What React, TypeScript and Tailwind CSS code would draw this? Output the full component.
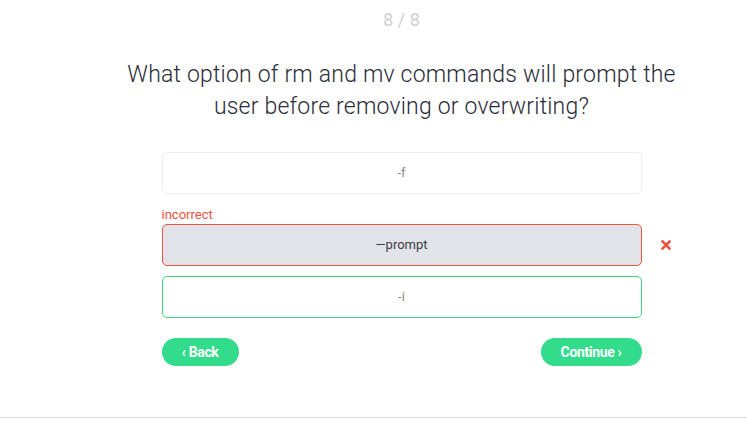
const options = [
  { label: '-f', state: 'idle' },
  { label: '—prompt', state: 'wrong' },
  { label: '-i', state: 'right' },
];

const App = () => {
  return (
    <div className="w-[747px] h-[422px] bg-white flex flex-col overflow-hidden" style={{ fontFamily: 'Roboto, "Liberation Sans", sans-serif' }}>
      <div className="flex-1 pl-14 flex flex-col items-center">
        <div className="mt-[9px] text-[18px] leading-[22px] text-[#cfcfd4]">8 / 8</div>

        <h1 className="mt-[28px] w-[560px] text-center text-[23px] leading-[32px] font-light tracking-[0.2px] text-[#2a2c38]">
          What option of rm and mv commands will prompt the user before removing or overwriting?
        </h1>

        <div className="mt-[29px] w-[480px] flex flex-col">
          {options.map((o, i) => (
            <div key={i} className={i === 0 ? '' : 'mt-[10px]'}>
              {o.state === 'wrong' && (
                <div className="text-[13px] leading-[14px] text-[#e8543f] mt-[4px] mb-[2px]">incorrect</div>
              )}
              <div className="relative">
                <div
                  className={
                    'h-[42px] rounded-[5px] border flex items-center justify-center text-[13px] ' +
                    (o.state === 'wrong'
                      ? 'bg-[#e2e3e8] border-[#e8543f] text-[#3a3c46]'
                      : o.state === 'right'
                      ? 'bg-white border-[#3fd37e] text-[#8a8a8a]'
                      : 'bg-white border-[#ececec] text-[#8a8a8a]')
                  }
                >
                  {o.label}
                </div>
                {o.state === 'wrong' && (
                  <svg className="absolute left-[499px] top-[16px]" width="10" height="10" viewBox="0 0 10 10">
                    <path d="M1.5 1.5 L8.5 8.5 M8.5 1.5 L1.5 8.5" stroke="#e8543f" strokeWidth="2.6" strokeLinecap="square" />
                  </svg>
                )}
              </div>
            </div>
          ))}
        </div>

        <div className="mt-[20px] w-[480px] flex justify-between">
          <button className="h-[28px] w-[77px] rounded-full bg-[#32dc8a] text-white text-[14px] font-bold tracking-tight">
            ‹ Back
          </button>
          <button className="h-[28px] w-[101px] rounded-full bg-[#32dc8a] text-white text-[14px] font-bold tracking-tight">
            Continue ›
          </button>
        </div>
      </div>
      <div className="h-px bg-[#dcdcdc] mb-[4px]" />
    </div>
  );
};

export default App;
